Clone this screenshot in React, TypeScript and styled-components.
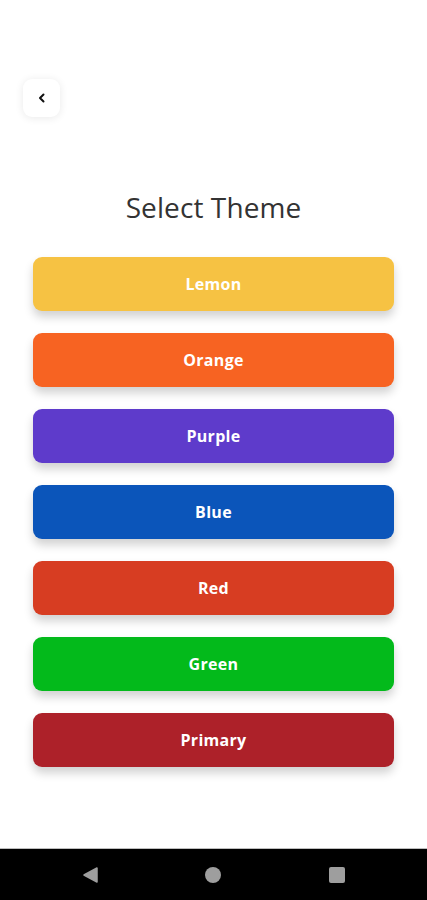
import React from "react";
import styled, { createGlobalStyle } from "styled-components";

const Global = createGlobalStyle`
  html, body { margin: 0; padding: 0; background: #ffffff; }
  body { font-family: "Open Sans", "Noto Sans", sans-serif; }
  * { box-sizing: border-box; }
`;

const Screen = styled.div`
  width: 427px;
  height: 900px;
  display: flex;
  flex-direction: column;
  background: #ffffff;
  overflow: hidden;
`;

const Content = styled.main`
  flex: 1;
  display: flex;
  flex-direction: column;
  padding: 79px 33px 0 33px;
`;

const TopBar = styled.div`
  display: flex;
  padding-left: 23px;
  margin-left: -33px;
`;

const BackButton = styled.button`
  width: 37px;
  height: 38px;
  border: none;
  border-radius: 9px;
  background: #ffffff;
  box-shadow: 0 1px 8px rgba(0, 0, 0, 0.09);
  display: flex;
  align-items: center;
  justify-content: center;
  padding: 0;
  color: #111;
`;

const Title = styled.h1`
  margin: 71px 0 0 0;
  text-align: center;
  font-size: 28px;
  line-height: 38px;
  font-weight: 400;
  color: #333333;
  letter-spacing: 0.1px;
`;

const List = styled.div`
  display: flex;
  flex-direction: column;
  gap: 22px;
  margin-top: 31px;
`;

const ThemeButton = styled.button<{ $bg: string }>`
  height: 54px;
  width: 100%;
  border: none;
  border-radius: 9px;
  background: ${(p) => p.$bg};
  color: #ffffff;
  font-family: "Open Sans", "Noto Sans", sans-serif;
  font-weight: 700;
  font-size: 16px;
  letter-spacing: 0.3px;
  box-shadow: 0 6px 10px rgba(0, 0, 0, 0.18);
  display: flex;
  align-items: center;
  justify-content: center;
`;

const NavBar = styled.nav`
  height: 52px;
  background: #000000;
  border-top: 1px solid #bdbdbd;
  display: grid;
  grid-template-columns: repeat(3, 1fr);
  align-items: center;
  justify-items: center;
  padding: 0 28px;
`;

const themes = [
  { name: "Lemon", color: "#F6C243" },
  { name: "Orange", color: "#F76322" },
  { name: "Purple", color: "#5E3BCB" },
  { name: "Blue", color: "#0B55BA" },
  { name: "Red", color: "#D73D22" },
  { name: "Green", color: "#03BA1B" },
  { name: "Primary", color: "#AD2129" },
];

export default function App() {
  return (
    <>
      <Global />
      <Screen>
        <Content>
          <TopBar>
            <BackButton aria-label="Back">
              <svg width="12" height="12" viewBox="0 0 12 12">
                <path d="M7.5 2.5 L4 6 L7.5 9.5" fill="none" stroke="#111" strokeWidth="2" strokeLinecap="round" strokeLinejoin="round" />
              </svg>
            </BackButton>
          </TopBar>
          <Title>Select Theme</Title>
          <List>
            {themes.map((t) => (
              <ThemeButton key={t.name} $bg={t.color}>
                {t.name}
              </ThemeButton>
            ))}
          </List>
        </Content>
        <NavBar>
          <svg width="18" height="18" viewBox="0 0 18 18">
            <path d="M16 2 L16 16 L3 9 Z" fill="#9e9e9e" stroke="#9e9e9e" strokeWidth="1.5" strokeLinejoin="round" />
          </svg>
          <svg width="18" height="18" viewBox="0 0 18 18">
            <circle cx="9" cy="9" r="8" fill="#9e9e9e" />
          </svg>
          <svg width="18" height="18" viewBox="0 0 18 18">
            <rect x="1" y="1" width="16" height="16" rx="2" fill="#9e9e9e" />
          </svg>
        </NavBar>
      </Screen>
    </>
  );
}
